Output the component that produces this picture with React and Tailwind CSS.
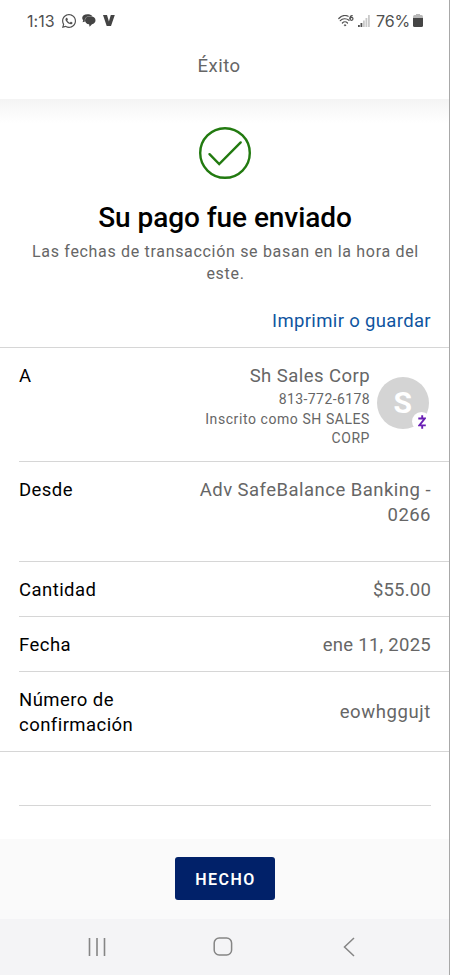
import { FaWhatsapp } from "react-icons/fa";

const StatusBar = () => (
  <div className="h-10 pt-px pl-[27px] pr-[26px] flex items-center justify-between text-[#505050]">
    <div className="flex items-center">
      <span className="w-[34px] font-[Inter,sans-serif] text-[16px] tracking-[0.05px] whitespace-nowrap">1:13</span>
      <FaWhatsapp className="size-4" />
      <svg className="ml-[5px] w-[14px] h-[13px]" viewBox="0 0 14 13" fill="#444">
        <path d="M5.500.3C2.300.3.2 1.800.2 4 .2 5 .6 5.700 1.200 6.300L.6 8.200 3 7.500C2 4 5 1.700 10.200 2.100 9.300.9 7.700.3 5.500.3Z" />
        <path d="M8.200 2.200C5 2.200 3 3.800 3 6.200 3 8.600 4.700 10.100 7.100 10.300L7.600 12.800 10 10.200C12.200 9.600 13.500 8.200 13.500 6.200 13.500 3.800 11.300 2.200 8.200 2.200Z" />
      </svg>
      <svg className="ml-[7px] w-3 h-[11px]" viewBox="0 0 12 11" fill="#444">
        <path d="M0 0H4L5.900 6.500 7.800 0H11.800L8 11H3.700Z" />
      </svg>
    </div>
    <div className="flex items-center">
      <svg className="w-4 h-[12px]" viewBox="0 0 16 12" fill="none" stroke="currentColor" strokeWidth="1.200" strokeLinecap="round">
        <path d="M.8 3.500C3.500.5 7.200 0 10.200 1.200M2.300 5.700C4.500 3.300 8.300 3 11 5.300M4.400 8C5.900 6.500 8 6.500 9.500 8" />
        <circle cx="7" cy="10.300" r="0.700" fill="currentColor" strokeWidth="0.600" />
        <path d="M14.200.6C12.600.8 11.900 1.900 11.900 3.600" />
        <circle cx="13.500" cy="3.800" r="1.500" />
      </svg>
      <svg className="ml-1 mt-px w-3 h-3" viewBox="0 0 12 12" fill="#c9c9c9">
        <path d="M0 10h1.800v2H0zM2.500 8h1.800v4H2.500z" fill="#505050" />
        <path d="M5 5.500h1.800V12H5zM7.500 3h1.800v9H7.500zM10 0h1.800v12H10z" />
      </svg>
      <span className="ml-[6px] w-[37px] font-[Inter,sans-serif] text-[16px] tracking-[-0.1px] whitespace-nowrap">76%</span>
      <svg className="w-[10px] h-[13px]" viewBox="0 0 10 13">
        <path d="M3 0h4v1h1.500Q10 1 10 3v1H0V3Q0 1 1.500 1H3Z" fill="#b8b8b8" />
        <path d="M0 4h10v7.500q0 1.500-1.500 1.500h-7Q0 13 0 11.500Z" fill="#454545" />
      </svg>
    </div>
  </div>
);

const ZelleMark = () => (
  <svg className="w-2 h-[14px]" viewBox="0 0 8 14" fill="none" stroke="#6a1fb5" strokeWidth="1.900">
    <path d="M.3 3.500H6.800L1.300 10.400H7.800M4.200.3V3.500M4.200 10.400V13.700" />
  </svg>
);

const rows = [
  { label: "Cantidad", value: "$55.00", className: "h-[55px] border-b", valueClass: "tracking-[0.2px]" },
  { label: "Fecha", value: "ene 11, 2025", className: "h-[55px] border-b", valueClass: "tracking-[0.27px]" },
  { label: "Número de confirmación", value: "eowhggujt", className: "h-[79px]", valueClass: "tracking-[0.6px]" },
];

export default function App() {
  return (
    <div className="w-[450px] h-[975px] flex flex-col overflow-hidden bg-white border-r border-[#a8a8a8] font-[Roboto,sans-serif] text-[#666]">
      <header className="h-[99px] shrink-0">
        <StatusBar />
        <h2 className="pt-[13px] pr-[11px] text-center text-[18.5px] leading-[26px] tracking-[0.5px]">Éxito</h2>
      </header>
      <div className="h-6 shrink-0 bg-linear-to-b from-[#f4f4f4] to-white" />

      <main className="h-[716px] shrink-0">
        <section className="h-[224px] flex flex-col items-center">
          <svg className="mt-[3px] size-[54px] shrink-0" viewBox="0 0 54 54" fill="none" stroke="#227a10" strokeWidth="2.400">
            <circle cx="27" cy="27" r="24.800" />
            <path d="M11.500 28.200 21.200 38 42.700 16.400" strokeLinecap="round" />
          </svg>
          <h1 className="mt-[21px] pl-px text-[28px] leading-[34px] tracking-[-0.06px] font-medium text-black whitespace-nowrap">Su pago fue enviado</h1>
          <p className="mt-[6px] pl-[22px] pr-5 text-center text-base leading-[22px] tracking-[0.68px]">
            Las fechas de transacción se basan en la hora del este.
          </p>
          <a className="mt-[23px] mr-[18px] self-end text-[18.5px] leading-[26px] tracking-[0.35px] text-[#0f55a0]">Imprimir o guardar</a>
        </section>

        <section className="border-y border-[#d6d6d6] pl-[19px] text-[18.5px] leading-[24.5px] tracking-[0.45px]">
          <div className="h-[114px] pt-4 pr-5 flex justify-between border-b border-[#d6d6d6]">
            <span className="text-black">A</span>
            <div className="flex">
              <div className="w-[190px] text-right">
                <p>Sh Sales Corp</p>
                <p className="text-sm leading-[21px] tracking-[0.4px]">813-772-6178</p>
                <p className="text-sm leading-[19px] tracking-[0.57px]">Inscrito como SH SALES CORP</p>
              </div>
              <div className="relative ml-[7px] mt-[13px] size-[52px] rounded-full bg-[#d4d4d4] flex items-center justify-center text-[30px] font-bold text-white">
                S
                <span className="absolute left-[35px] top-[35px] size-[19px] rounded-full bg-white flex items-center justify-center">
                  <ZelleMark />
                </span>
              </div>
            </div>
          </div>
          <div className="h-[100px] pt-4 pr-[18px] flex justify-between border-b border-[#d6d6d6]">
            <span className="text-black">Desde</span>
            <span className="w-[240px] text-right tracking-[0.47px]">Adv SafeBalance Banking - 0266</span>
          </div>
          {rows.map((row) => (
            <div key={row.label} className={`${row.className} pt-[2px] pr-[18px] flex items-center justify-between border-[#d6d6d6]`}>
              <span className="w-[140px] text-black">{row.label}</span>
              <span className={row.valueClass}>{row.value}</span>
            </div>
          ))}
        </section>
        <div className="h-[54px] ml-[19px] mr-[18px] border-b border-[#d6d6d6]" />
      </main>

      <footer className="h-20 shrink-0 bg-[#fafafa] flex justify-center">
        <button className="mt-[18px] w-[100px] h-[43px] pt-[2px] pl-[2px] rounded-[3px] bg-[#012169] text-white text-base font-semibold tracking-[1.500px]">
          HECHO
        </button>
      </footer>
      <nav className="h-14 shrink-0 bg-[#f4f4f6] text-[#858585] flex items-center pl-[87px] pb-px">
        <svg className="w-5 h-[18px]" viewBox="0 0 20 18" stroke="currentColor" strokeWidth="1.600">
          <path d="M2.500 0v18M10 0v18M17.500 0v18" />
        </svg>
        <svg className="ml-[106px] w-[20px] h-[19px]" viewBox="0 0 20 19" fill="none" stroke="currentColor" strokeWidth="1.500">
          <rect x="1.200" y="1" width="17.400" height="17" rx="5" />
        </svg>
        <svg className="ml-[110px] w-3 h-5" viewBox="0 0 12 20" fill="none" stroke="currentColor" strokeWidth="1.500">
          <path d="M11 1 1.500 10 11 19" />
        </svg>
      </nav>
    </div>
  );
}
